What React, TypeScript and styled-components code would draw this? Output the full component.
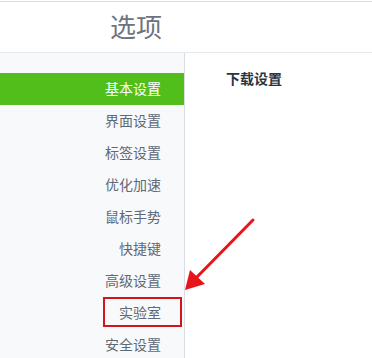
import React from "react";
import styled, { createGlobalStyle } from "styled-components";

const Global = createGlobalStyle`
  html, body { margin: 0; padding: 0; background: #fff; overflow: hidden; }
  body { font-family: "Noto Sans CJK SC", "Noto Sans", sans-serif; }
`;

const Page = styled.div`
  position: relative;
  width: 372px;
  height: 358px;
  padding-top: 1px;
  box-sizing: border-box;
  display: flex;
  flex-direction: column;
  overflow: hidden;
`;

const Header = styled.header`
  height: 51px;
  border-top: 1px solid #dedede;
  border-bottom: 1px solid #e6e8ec;
  display: flex;
  align-items: center;
  padding-left: 110px;
  padding-bottom: 3px;
  box-sizing: border-box;
  height: 52px;
`;

const Title = styled.h1`
  margin: 0;
  font-size: 26px;
  font-weight: 400;
  color: #6c7480;
  line-height: 1;
`;

const Body = styled.div`
  flex: 1;
  display: flex;
  min-height: 0;
`;

const Sidebar = styled.nav`
  width: 184px;
  background: #f8f9fb;
  border-right: 1px solid #d9dde3;
  padding-top: 20px;
  display: flex;
  flex-direction: column;
`;

const Item = styled.div<{ $active?: boolean }>`
  position: relative;
  height: 32px;
  box-sizing: border-box;
  padding-bottom: 2px;
  flex: none;
  display: flex;
  align-items: center;
  justify-content: flex-end;
  padding-right: 23px;
  font-size: 14px;
  color: ${(p) => (p.$active ? "#ffffff" : "#5f6976")};
  background: ${(p) => (p.$active ? "#52be1c" : "transparent")};
`;

const Highlight = styled.span`
  position: absolute;
  left: 103px;
  top: 0;
  width: 79px;
  height: 30px;
  box-sizing: border-box;
  border: 2px solid #d3141d;
`;

const Content = styled.main`
  flex: 1;
  padding: 15px 0 0 41px;
`;

const SectionTitle = styled.h2`
  margin: 0;
  font-size: 14px;
  font-weight: 700;
  color: #2a3442;
  line-height: 20px;
`;

const Arrow = styled.svg`
  position: absolute;
  left: 0;
  top: 0;
  pointer-events: none;
`;

const items = [
  "基本设置",
  "界面设置",
  "标签设置",
  "优化加速",
  "鼠标手势",
  "快捷键",
  "高级设置",
  "实验室",
  "安全设置",
];

export default function App() {
  return (
    <>
      <Global />
      <Page>
        <Header>
          <Title>选项</Title>
        </Header>
        <Body>
          <Sidebar>
            {items.map((t, i) => (
              <Item key={t} $active={i === 0}>
                {t}
                {t === "实验室" && <Highlight />}
              </Item>
            ))}
          </Sidebar>
          <Content>
            <SectionTitle>下载设置</SectionTitle>
          </Content>
        </Body>
        <Arrow width="372" height="358" viewBox="0 0 372 358">
          <line x1="253" y1="220" x2="196" y2="278" stroke="#e8141c" strokeWidth="3" strokeLinecap="round" />
          <polygon points="185,290 190,270 205,284" fill="#e8141c" />
        </Arrow>
      </Page>
    </>
  );
}
